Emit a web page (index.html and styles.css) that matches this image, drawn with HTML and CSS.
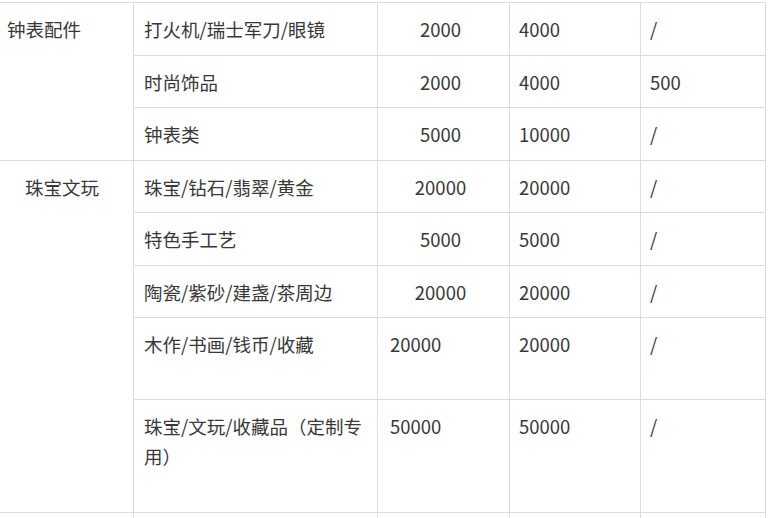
FILE: index.html
```html
<!DOCTYPE html>
<html lang="zh-CN">
<head>
<meta charset="utf-8">
<title>类目保证金</title>
<link rel="stylesheet" href="styles.css">
</head>
<body>
<table class="grid">
  <colgroup>
    <col class="c1"><col class="c2"><col class="c3"><col class="c4"><col class="c5">
  </colgroup>
  <tbody>
    <tr class="row">
      <td class="cat" rowspan="3">钟表配件</td>
      <td class="name">打火机/瑞士军刀/眼镜</td>
      <td class="mid">2000</td>
      <td class="val">4000</td>
      <td class="val">/</td>
    </tr>
    <tr class="row">
      <td class="name">时尚饰品</td>
      <td class="mid">2000</td>
      <td class="val">4000</td>
      <td class="val">500</td>
    </tr>
    <tr class="row">
      <td class="name">钟表类</td>
      <td class="mid">5000</td>
      <td class="val">10000</td>
      <td class="val">/</td>
    </tr>
    <tr class="row">
      <td class="cat cat-indent" rowspan="5">珠宝文玩</td>
      <td class="name">珠宝/钻石/翡翠/黄金</td>
      <td class="mid">20000</td>
      <td class="val">20000</td>
      <td class="val">/</td>
    </tr>
    <tr class="row">
      <td class="name">特色手工艺</td>
      <td class="mid">5000</td>
      <td class="val">5000</td>
      <td class="val">/</td>
    </tr>
    <tr class="row">
      <td class="name">陶瓷/紫砂/建盏/茶周边</td>
      <td class="mid">20000</td>
      <td class="val">20000</td>
      <td class="val">/</td>
    </tr>
    <tr class="row-tall">
      <td class="name">木作/书画/钱币/收藏</td>
      <td class="left">20000</td>
      <td class="val">20000</td>
      <td class="val">/</td>
    </tr>
    <tr class="row-taller">
      <td class="name">珠宝/文玩/收藏品（定制专用）</td>
      <td class="left">50000</td>
      <td class="val">50000</td>
      <td class="val">/</td>
    </tr>
    <tr class="row">
      <td class="cat"></td>
      <td class="name"></td>
      <td class="left"></td>
      <td class="val"></td>
      <td class="val"></td>
    </tr>
  </tbody>
</table>
</body>
</html>
```

FILE: styles.css
```css
html, body {
  margin: 0;
  padding: 0;
  background: #ffffff;
}

body {
  font-family: "Noto Sans CJK SC", "Noto Sans", sans-serif;
  font-size: 18.5px;
  color: #383838;
  overflow: hidden;
}

.grid {
  table-layout: fixed;
  width: 766px;
  border-collapse: separate;
  border-spacing: 0;
  border-top: 1px solid #dcdcdc;
  margin-top: 2px;
}

.c1 { width: 134px; }
.c2 { width: 244px; }
.c3 { width: 132px; }
.c4 { width: 131px; }
.c5 { width: 125px; }

.grid td {
  border-right: 1px solid #dcdcdc;
  border-bottom: 1px solid #dcdcdc;
  padding: 11px 10px 0 10px;
  line-height: 30px;
  vertical-align: top;
  text-align: left;
  white-space: normal;
}

.row { height: 52.5px; }
.row-tall { height: 82px; }
.row-taller { height: 113px; }

.grid td.cat { padding-left: 7px; }
.grid td.cat-indent { padding-left: 25px; }
.grid td.mid { text-align: center; padding-left: 10px; padding-right: 16px; }
.grid td.left { padding-left: 12px; }
.grid td.val { padding-left: 9px; }
```
